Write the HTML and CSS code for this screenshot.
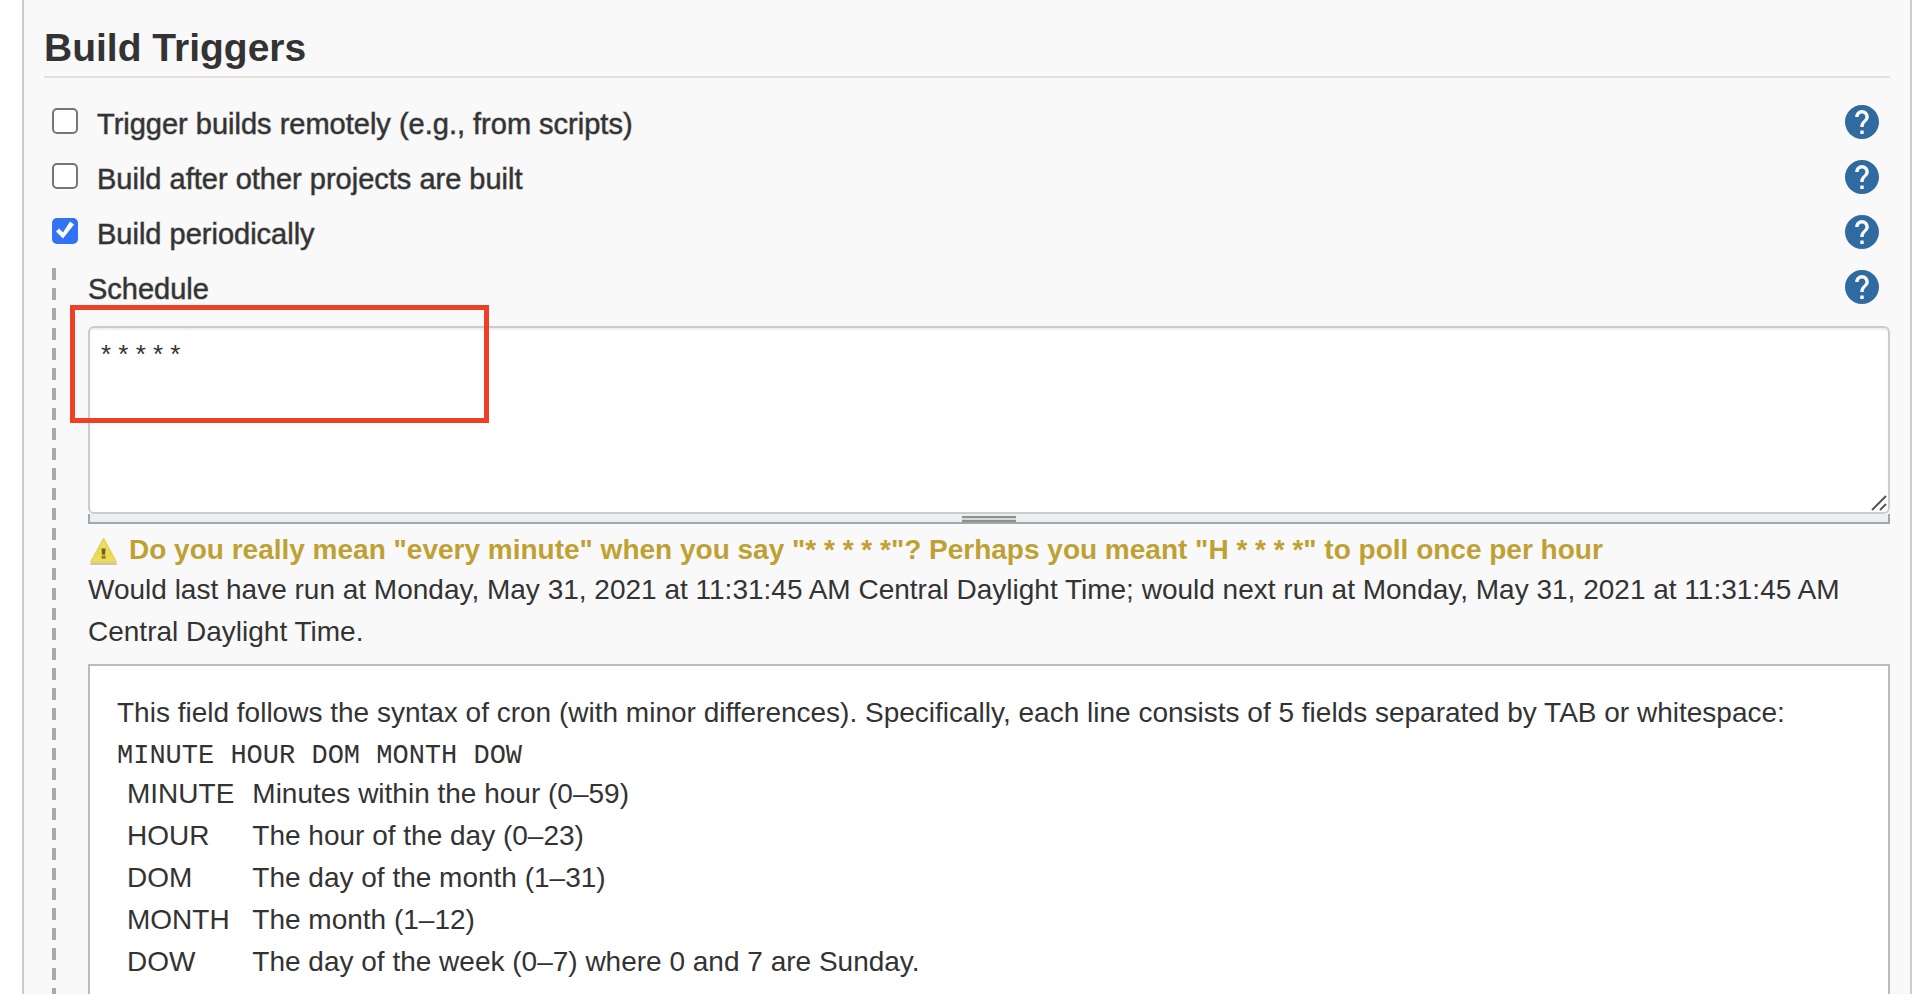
FILE: index.html
```html
<!DOCTYPE html>
<html lang="en">
<head>
<meta charset="utf-8">
<title>Build Triggers</title>
<link rel="stylesheet" href="styles.css">
</head>
<body>
<svg class="sprite" aria-hidden="true">
  <symbol id="help" viewBox="2 2 20 20">
    <path d="M12 2C6.480 2 2 6.480 2 12s4.480 10 10 10 10-4.480 10-10S17.520 2 12 2zm1 17h-2v-2h2v2zm2.070-7.750l-.9.920C13.450 12.900 13 13.500 13 15h-2v-.5c0-1.100.45-2.100 1.170-2.830l1.240-1.260c.37-.36.59-.86.59-1.410 0-1.100-.9-2-2-2s-2 .9-2 2H8c0-2.210 1.790-4 4-4s4 1.790 4 4c0 .88-.36 1.680-.93 2.250z"/>
  </symbol>
</svg>
<main class="panel">
  <h1 class="title">Build Triggers</h1>
  <form class="triggers">
    <div class="row">
      <input class="check" type="checkbox" id="remote">
      <label class="label" for="remote">Trigger builds remotely (e.g., from scripts)</label>
      <button class="help" type="button" aria-label="Help for remote trigger"><svg><use href="#help"/></svg></button>
    </div>
    <div class="row">
      <input class="check" type="checkbox" id="after">
      <label class="label" for="after">Build after other projects are built</label>
      <button class="help" type="button" aria-label="Help for upstream projects"><svg><use href="#help"/></svg></button>
    </div>
    <div class="row">
      <input class="check" type="checkbox" id="periodic" checked>
      <label class="label" for="periodic">Build periodically</label>
      <button class="help" type="button" aria-label="Help for periodic builds"><svg><use href="#help"/></svg></button>
    </div>
    <section class="nested">
      <div class="row row-nested">
        <label class="label" for="schedule">Schedule</label>
        <button class="help" type="button" aria-label="Help for schedule"><svg><use href="#help"/></svg></button>
      </div>
      <div class="field">
        <textarea class="schedule" id="schedule" spellcheck="false">* * * * *</textarea>
        <svg class="grip" viewBox="0 0 16 16"><path d="M1 15L15 1M9 15l6-6"/></svg>
        <div class="highlight"></div>
      </div>
      <div class="resizer"><span class="handle"></span></div>
      <p class="warning">
        <svg class="warning-icon" viewBox="0 0 28 28">
          <defs><linearGradient id="amber" x1="0" y1="0" x2="0" y2="1"><stop offset="0" stop-color="#f3e36a"/><stop offset=".6" stop-color="#ecd94b"/><stop offset="1" stop-color="#f2e05c"/></linearGradient></defs>
          <path d="M3 27h24" stroke="#c9c5b4" stroke-width="2" stroke-linecap="round"/>
          <path d="M15 3L27 25H3z" fill="url(#amber)" stroke="#e6d565" stroke-width="2" stroke-linejoin="round"/>
          <path d="M13 12h4l-.6 6h-2.800z" fill="#6b6224"/><rect x="13" y="19" width="4" height="3" fill="#8d8238"/>
        </svg>
        <span>Do you really mean "every minute" when you say "* * * * *"? Perhaps you meant "H * * * *" to poll once per hour</span>
      </p>
      <p class="status">Would last have run at Monday, May 31, 2021 at 11:31:45 AM Central Daylight Time; would next run at Monday, May 31, 2021 at 11:31:45 AM Central Daylight Time.</p>
      <div class="help-text">
        <p class="intro">This field follows the syntax of cron (with minor differences). Specifically, each line consists of 5 fields separated by TAB or whitespace:</p>
        <code class="syntax">MINUTE HOUR DOM MONTH DOW</code>
        <table class="fields">
          <tr><td>MINUTE</td><td>Minutes within the hour (0–59)</td></tr>
          <tr><td>HOUR</td><td>The hour of the day (0–23)</td></tr>
          <tr><td>DOM</td><td>The day of the month (1–31)</td></tr>
          <tr><td>MONTH</td><td>The month (1–12)</td></tr>
          <tr><td>DOW</td><td>The day of the week (0–7) where 0 and 7 are Sunday.</td></tr>
        </table>
      </div>
    </section>
  </form>
</main>
</body>
</html>
```

FILE: styles.css
```css
* { box-sizing: border-box; }

body {
  margin: 0;
  min-height: 100vh;
  display: flex;
  flex-direction: column;
  background: #fff;
  color: #333;
  font: 28px/42px "Helvetica Neue", "Liberation Sans", Arial, sans-serif;
}

p { margin: 0; }

.sprite { display: none; }

.panel {
  flex: 1;
  display: flex;
  flex-direction: column;
  margin: 0 16px 0 22px;
  padding: 24px 20px 0;
  background: #f9f9f9;
  border: solid #ccc;
  border-width: 0 2px;
}

.title {
  margin: 0;
  padding-bottom: 4px;
  border-bottom: 2px solid #e0e0e0;
  font-size: 39px;
  line-height: 48px;
}

.triggers {
  flex: 1;
  display: flex;
  flex-direction: column;
  padding-top: 18px;
}

.row {
  display: flex;
  align-items: center;
  height: 55px;
  padding: 0 11px 4px 8px;
}

.row-nested { padding-left: 0; }

.check {
  appearance: none;
  width: 26px;
  height: 26px;
  margin: 0 19px 2px 0;
  background: #fff;
  border: 2px solid #767676;
  border-radius: 5px;
}

.check:checked {
  border: 0;
  background: #3273f6;
}

.check:checked::before {
  content: "";
  display: block;
  width: 26px;
  height: 26px;
  background: #fff;
  clip-path: polygon(4px 14px, 7px 11px, 11px 15px, 18px 4px, 22px 7px, 11px 21px);
}

.label {
  flex: 1;
  padding-top: 4px;
  font-size: 29px;
  -webkit-text-stroke: 1px rgba(51, 51, 51, 0.5);
}

.help {
  width: 34px;
  height: 34px;
  padding: 0;
  border: 0;
  background: none;
}

.help svg {
  display: block;
  width: 34px;
  height: 34px;
  fill: #2f6aa0;
}

.nested {
  flex: 1;
  display: flex;
  flex-direction: column;
  margin-left: 8px;
  padding-left: 36px;
  background: repeating-linear-gradient(#aaa 0 12px, transparent 12px 20px) 0 7px / 4px 100% no-repeat;
}

.field {
  position: relative;
  padding-top: 10px;
}

.schedule {
  display: block;
  width: 100%;
  height: 188px;
  padding: 10px 11px;
  resize: none;
  border: 2px solid #ccc;
  border-radius: 6px;
  outline: 0;
  background: #fff;
  box-shadow: inset 0 2px 2px #eee;
  color: #333;
  font: 26px/32px "Liberation Sans", Arial, sans-serif;
}

.grip {
  position: absolute;
  right: 3px;
  bottom: 3px;
  width: 16px;
  height: 16px;
  stroke: #555;
  stroke-width: 2;
}

.highlight {
  position: absolute;
  top: -11px;
  left: -18px;
  width: 419px;
  height: 118px;
  border: 5px solid #ee4025;
  pointer-events: none;
}

.resizer {
  height: 10px;
  display: flex;
  justify-content: center;
  padding-top: 2px;
  background: #ebeff2;
  border: solid #9da8af;
  border-width: 0 2px 2px;
}

.handle {
  width: 54px;
  height: 6px;
  background: #d8dad7;
  border: solid #8d928b;
  border-width: 2px 0;
}

.warning {
  display: flex;
  align-items: center;
  gap: 12px;
  padding-top: 7px;
  color: #bfa133;
  font-weight: bold;
  line-height: 38px;
}

.warning-icon {
  width: 29px;
  height: 29px;
  fill: none;
}

.help-text {
  flex: 1;
  margin-top: 11px;
  padding: 26px 27px 0;
  background: #fff;
  border: 2px solid #bbb;
  border-bottom: 0;
}

.syntax {
  display: block;
  padding-top: 6px;
  font: 27px/33px "Liberation Mono", "Courier New", monospace;
}

.fields {
  border-collapse: collapse;
  margin-left: 10px;
}

.fields td { padding: 0 18px 0 0; }
```
